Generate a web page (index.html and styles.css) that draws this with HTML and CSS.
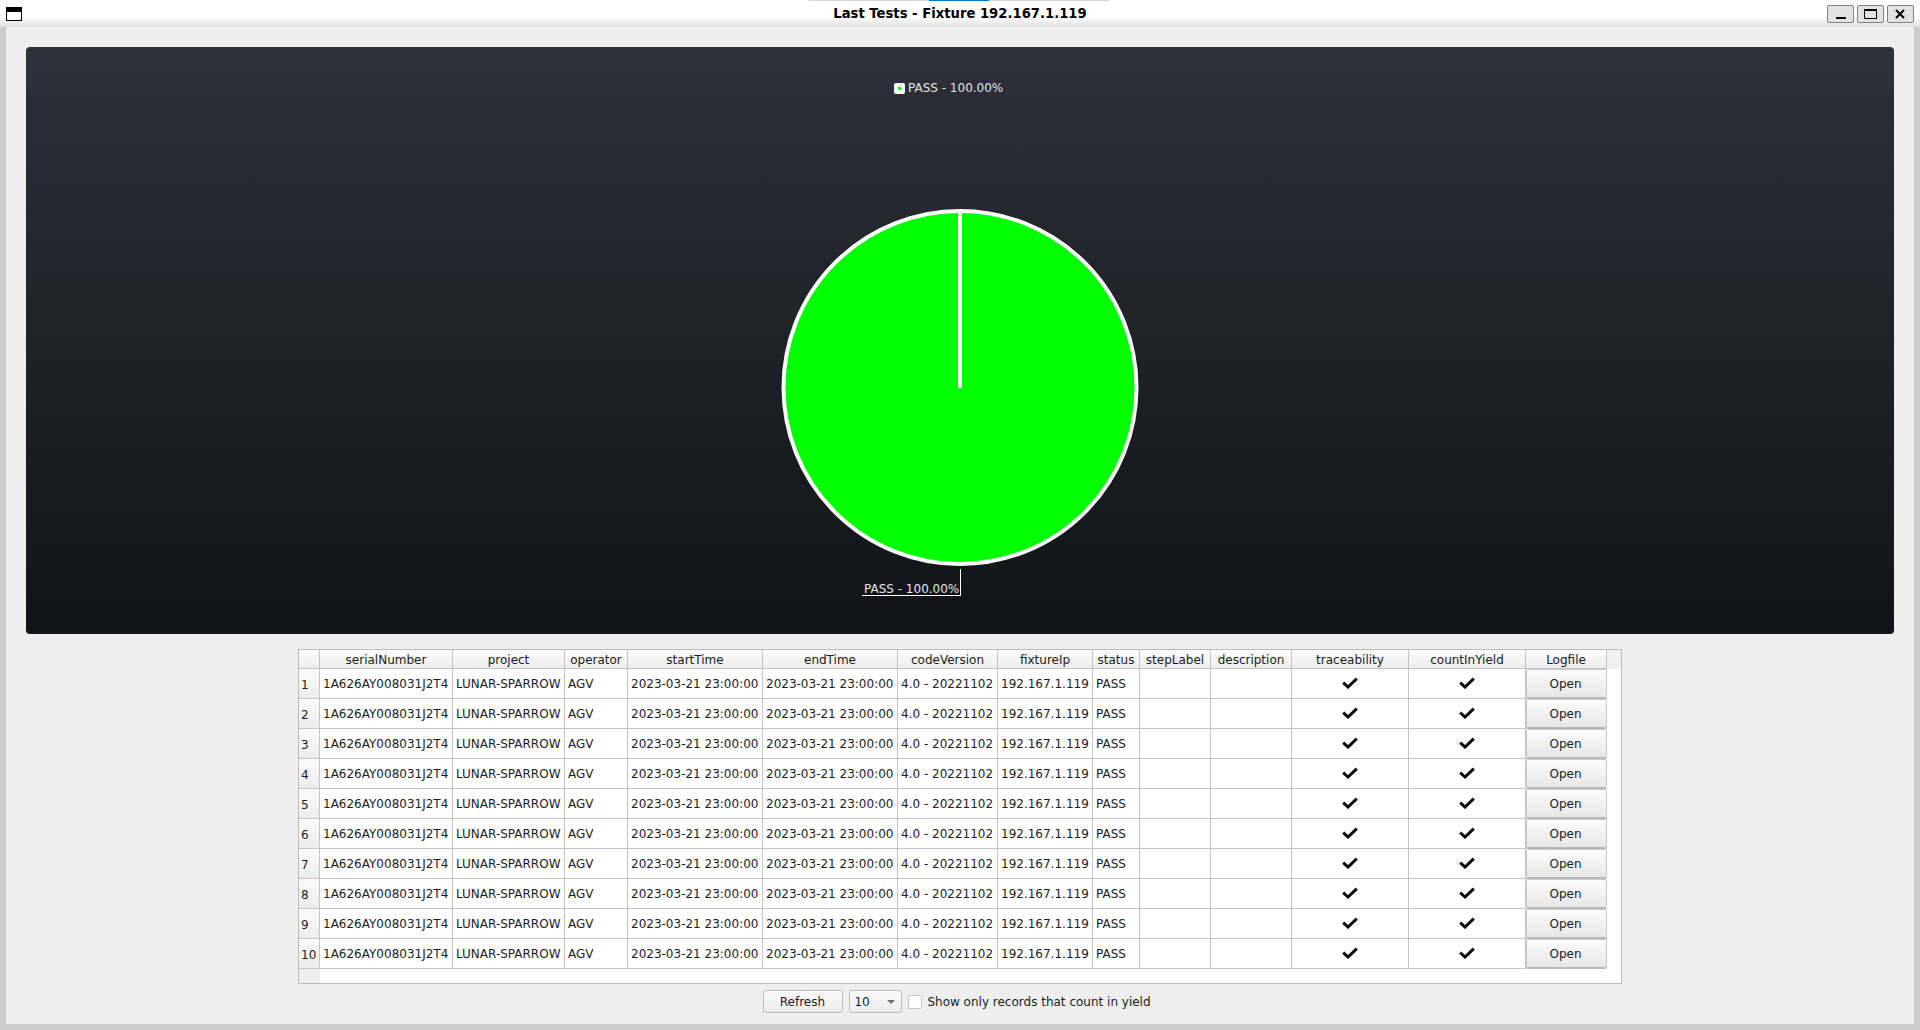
FILE: index.html
```html
<!DOCTYPE html>
<html lang="en">
<head>
  <meta charset="UTF-8">
  <title>Last Tests - Fixture 192.167.1.119</title>
  <link rel="stylesheet" href="styles.css">
</head>
<body>

  <svg class="defs" width="0" height="0">
    <symbol id="tick" viewBox="0 0 16 12">
      <polyline points="1.2,5.6 6,10 14.8,1.6" fill="none" stroke="#0c0c0c" stroke-width="3"/>
    </symbol>
  </svg>

  <header class="titlebar">
    <div class="titlebar-left"><span class="window-icon"></span></div>
    <div class="title">Last Tests - Fixture 192.167.1.119</div>
    <div class="titlebar-right">
      <button class="wm-btn" type="button">
        <svg width="25" height="16" viewBox="0 0 25 16"><rect x="8" y="11" width="10" height="2" fill="#000"/></svg>
      </button>
      <button class="wm-btn" type="button">
        <svg width="25" height="16" viewBox="0 0 25 16"><rect x="6.5" y="3.5" width="12" height="9" fill="none" stroke="#000"/><rect x="6" y="3" width="13" height="2" fill="#000"/></svg>
      </button>
      <button class="wm-btn" type="button">
        <svg width="25" height="16" viewBox="0 0 25 16"><path d="M8 4l8 8M16 4l-8 8" stroke="#000" stroke-width="2" fill="none"/></svg>
      </button>
    </div>
    <span class="focus-strip"><span class="focus-strip-blue"></span></span>
  </header>

  <main class="window">

    <section class="chart">
      <svg class="chart-canvas" width="1868" height="587" viewBox="0 0 1868 587">
        <rect x="868" y="36" width="11" height="11" rx="2" fill="#fff"/>
        <rect x="872" y="40" width="3" height="3" fill="#00ff00"/>
        <text class="chart-label" x="882" y="45">PASS - 100.00%</text>
        <circle cx="934" cy="340.5" r="176.5" fill="#00ff00" stroke="#fff" stroke-width="4"/>
        <rect x="932" y="163" width="4" height="178" fill="#fff"/>
        <path d="M934.5 522V548.5H836" fill="none" stroke="#fff"/>
        <text class="chart-label" x="838" y="546">PASS - 100.00%</text>
      </svg>
    </section>

    <section class="table-frame">
      <table class="tests">
        <colgroup>
          <col class="c-row"><col class="c-serial"><col class="c-project"><col class="c-operator">
          <col class="c-time"><col class="c-time"><col class="c-version"><col class="c-ip">
          <col class="c-status"><col class="c-step"><col class="c-desc"><col class="c-flag">
          <col class="c-flag"><col class="c-log"><col class="c-rest">
        </colgroup>
        <thead>
          <tr>
            <th></th>
            <th>serialNumber</th>
            <th>project</th>
            <th>operator</th>
            <th>startTime</th>
            <th>endTime</th>
            <th>codeVersion</th>
            <th>fixtureIp</th>
            <th>status</th>
            <th>stepLabel</th>
            <th>description</th>
            <th>traceability</th>
            <th>countInYield</th>
            <th>Logfile</th>
            <th class="rest-head"></th>
          </tr>
        </thead>
        <tbody>
          <tr><th class="row-num">1</th><td>1A626AY008031J2T4</td><td>LUNAR-SPARROW</td><td>AGV</td><td>2023-03-21 23:00:00</td><td>2023-03-21 23:00:00</td><td>4.0 - 20221102</td><td>192.167.1.119</td><td>PASS</td><td></td><td></td><td class="flag"><svg class="tick"><use href="#tick"/></svg></td><td class="flag"><svg class="tick"><use href="#tick"/></svg></td><td class="log"><button class="open-btn" type="button">Open</button></td><td class="rest"></td></tr>
          <tr><th class="row-num">2</th><td>1A626AY008031J2T4</td><td>LUNAR-SPARROW</td><td>AGV</td><td>2023-03-21 23:00:00</td><td>2023-03-21 23:00:00</td><td>4.0 - 20221102</td><td>192.167.1.119</td><td>PASS</td><td></td><td></td><td class="flag"><svg class="tick"><use href="#tick"/></svg></td><td class="flag"><svg class="tick"><use href="#tick"/></svg></td><td class="log"><button class="open-btn" type="button">Open</button></td><td class="rest"></td></tr>
          <tr><th class="row-num">3</th><td>1A626AY008031J2T4</td><td>LUNAR-SPARROW</td><td>AGV</td><td>2023-03-21 23:00:00</td><td>2023-03-21 23:00:00</td><td>4.0 - 20221102</td><td>192.167.1.119</td><td>PASS</td><td></td><td></td><td class="flag"><svg class="tick"><use href="#tick"/></svg></td><td class="flag"><svg class="tick"><use href="#tick"/></svg></td><td class="log"><button class="open-btn" type="button">Open</button></td><td class="rest"></td></tr>
          <tr><th class="row-num">4</th><td>1A626AY008031J2T4</td><td>LUNAR-SPARROW</td><td>AGV</td><td>2023-03-21 23:00:00</td><td>2023-03-21 23:00:00</td><td>4.0 - 20221102</td><td>192.167.1.119</td><td>PASS</td><td></td><td></td><td class="flag"><svg class="tick"><use href="#tick"/></svg></td><td class="flag"><svg class="tick"><use href="#tick"/></svg></td><td class="log"><button class="open-btn" type="button">Open</button></td><td class="rest"></td></tr>
          <tr><th class="row-num">5</th><td>1A626AY008031J2T4</td><td>LUNAR-SPARROW</td><td>AGV</td><td>2023-03-21 23:00:00</td><td>2023-03-21 23:00:00</td><td>4.0 - 20221102</td><td>192.167.1.119</td><td>PASS</td><td></td><td></td><td class="flag"><svg class="tick"><use href="#tick"/></svg></td><td class="flag"><svg class="tick"><use href="#tick"/></svg></td><td class="log"><button class="open-btn" type="button">Open</button></td><td class="rest"></td></tr>
          <tr><th class="row-num">6</th><td>1A626AY008031J2T4</td><td>LUNAR-SPARROW</td><td>AGV</td><td>2023-03-21 23:00:00</td><td>2023-03-21 23:00:00</td><td>4.0 - 20221102</td><td>192.167.1.119</td><td>PASS</td><td></td><td></td><td class="flag"><svg class="tick"><use href="#tick"/></svg></td><td class="flag"><svg class="tick"><use href="#tick"/></svg></td><td class="log"><button class="open-btn" type="button">Open</button></td><td class="rest"></td></tr>
          <tr><th class="row-num">7</th><td>1A626AY008031J2T4</td><td>LUNAR-SPARROW</td><td>AGV</td><td>2023-03-21 23:00:00</td><td>2023-03-21 23:00:00</td><td>4.0 - 20221102</td><td>192.167.1.119</td><td>PASS</td><td></td><td></td><td class="flag"><svg class="tick"><use href="#tick"/></svg></td><td class="flag"><svg class="tick"><use href="#tick"/></svg></td><td class="log"><button class="open-btn" type="button">Open</button></td><td class="rest"></td></tr>
          <tr><th class="row-num">8</th><td>1A626AY008031J2T4</td><td>LUNAR-SPARROW</td><td>AGV</td><td>2023-03-21 23:00:00</td><td>2023-03-21 23:00:00</td><td>4.0 - 20221102</td><td>192.167.1.119</td><td>PASS</td><td></td><td></td><td class="flag"><svg class="tick"><use href="#tick"/></svg></td><td class="flag"><svg class="tick"><use href="#tick"/></svg></td><td class="log"><button class="open-btn" type="button">Open</button></td><td class="rest"></td></tr>
          <tr><th class="row-num">9</th><td>1A626AY008031J2T4</td><td>LUNAR-SPARROW</td><td>AGV</td><td>2023-03-21 23:00:00</td><td>2023-03-21 23:00:00</td><td>4.0 - 20221102</td><td>192.167.1.119</td><td>PASS</td><td></td><td></td><td class="flag"><svg class="tick"><use href="#tick"/></svg></td><td class="flag"><svg class="tick"><use href="#tick"/></svg></td><td class="log"><button class="open-btn" type="button">Open</button></td><td class="rest"></td></tr>
          <tr><th class="row-num">10</th><td>1A626AY008031J2T4</td><td>LUNAR-SPARROW</td><td>AGV</td><td>2023-03-21 23:00:00</td><td>2023-03-21 23:00:00</td><td>4.0 - 20221102</td><td>192.167.1.119</td><td>PASS</td><td></td><td></td><td class="flag"><svg class="tick"><use href="#tick"/></svg></td><td class="flag"><svg class="tick"><use href="#tick"/></svg></td><td class="log"><button class="open-btn" type="button">Open</button></td><td class="rest"></td></tr>
        </tbody>
      </table>
      <div class="table-stub"></div>
    </section>

    <section class="controls">
      <button class="refresh-btn" type="button">Refresh</button>
      <div class="combo"><span>10</span><span class="combo-arrow"></span></div>
      <label class="yield-check"><span class="checkbox"></span>Show only records that count in yield</label>
    </section>

  </main>
</body>
</html>
```

FILE: styles.css
```css
html, body {
  margin: 0;
  padding: 0;
}

body {
  width: 1920px;
  height: 1030px;
  overflow: hidden;
  font-family: "DejaVu Sans", sans-serif;
  font-size: 12px;
  color: #1c1c1c;
  background-color: #eeeeee;
}

.defs {
  position: absolute;
}

/* title bar */
.titlebar {
  position: relative;
  display: grid;
  grid-template-columns: 1fr auto 1fr;
  align-items: center;
  height: 27px;
  box-sizing: border-box;
  padding: 0 6px;
  background: linear-gradient(#ffffff 0, #ffffff 16px, #e0e0e0 27px);
}

.window-icon {
  display: block;
  width: 16px;
  height: 14px;
  box-sizing: border-box;
  margin-top: 1px;
  border: 1px solid #000;
  border-top-width: 5px;
  background-color: #fff;
}

.title {
  font-size: 13.2px;
  font-weight: bold;
  color: #000;
  margin-top: -1px;
}

.titlebar-right {
  display: flex;
  justify-content: flex-end;
  gap: 3px;
  margin-top: 1px;
}

.wm-btn {
  display: flex;
  align-items: center;
  justify-content: center;
  width: 27px;
  height: 18px;
  padding: 0;
  border: 1px solid #808080;
  border-radius: 2px;
  background-color: #e2e2e2;
}

.focus-strip {
  position: absolute;
  left: 809px;
  top: 0;
  width: 301px;
  height: 1px;
  background-color: #d8d8d8;
}

.focus-strip-blue {
  display: block;
  width: 60px;
  height: 1px;
  margin-left: 120px;
  background-color: #0078d7;
}

/* window body */
.window {
  display: flex;
  flex-direction: column;
  align-items: center;
  height: 1003px;
  box-sizing: border-box;
  padding: 20px 20px 0;
  border-left: 6px solid #cccccc;
  border-right: 6px solid #cccccc;
  border-bottom: 6px solid #cccccc;
  background-color: #eeeeee;
}

/* chart */
.chart {
  width: 1868px;
  height: 587px;
  flex: none;
  border-radius: 4px;
  overflow: hidden;
  background: linear-gradient(#2e303a, #121318);
}

.chart-canvas {
  display: block;
}

.chart-label {
  font-family: "DejaVu Sans", sans-serif;
  font-size: 12px;
  fill: #e4e4e4;
}

/* table */
.table-frame {
  width: 1324px;
  box-sizing: border-box;
  margin-top: 15px;
  border: 1px solid #bcbcbc;
  background-color: #fff;
}

.tests {
  table-layout: fixed;
  width: 1322px;
  border-collapse: separate;
  border-spacing: 0;
}

.c-row { width: 21px; }
.c-serial { width: 133px; }
.c-project { width: 112px; }
.c-operator { width: 63px; }
.c-time { width: 135px; }
.c-version { width: 100px; }
.c-ip { width: 95px; }
.c-status { width: 47px; }
.c-step { width: 71px; }
.c-desc { width: 81px; }
.c-flag { width: 117px; }
.c-log { width: 81px; }
.c-rest { width: 14px; }

.tests th,
.tests td {
  padding: 0;
  box-sizing: border-box;
  border-right: 1px solid #c4c4c4;
  border-bottom: 1px solid #c4c4c4;
  font-weight: normal;
  white-space: nowrap;
  overflow: hidden;
}

.tests thead th {
  height: 19px;
  padding-top: 1px;
  text-align: center;
  background: linear-gradient(#fbfbfb, #ececec);
}

.tests thead th.rest-head {
  border: 0;
  background: #f0f0f0;
}

.tests td {
  height: 30px;
  padding-left: 3px;
}

.tests tbody th.row-num {
  text-align: left;
  padding-left: 2px;
  padding-top: 2px;
  background: linear-gradient(#fbfbfb, #ececec);
}

.tests td.flag {
  padding: 0;
  text-align: center;
}

.tick {
  display: inline-block;
  width: 16px;
  height: 12px;
  vertical-align: -1px;
}

.tests td.log {
  padding: 0;
  border: 0;
}

.tests td.rest {
  border: 0;
}

.open-btn {
  display: block;
  width: 100%;
  height: 30px;
  padding: 0 2px 0 0;
  border: 1px solid #c8c8c8;
  border-bottom: 2px solid #b8b8b8;
  border-radius: 2px;
  font-family: "DejaVu Sans", sans-serif;
  font-size: 12px;
  color: #1c1c1c;
  background: linear-gradient(#fcfcfc, #e6e6e6);
}

.table-stub {
  width: 21px;
  height: 14px;
  background-color: #eeeeee;
}

/* bottom controls */
.controls {
  display: flex;
  align-items: center;
  margin-top: 6px;
  padding-right: 6px;
}

.refresh-btn {
  width: 80px;
  height: 23px;
  padding: 0 2px 0 0;
  border: 1px solid #bcbcbc;
  border-radius: 3px;
  font-family: "DejaVu Sans", sans-serif;
  font-size: 12px;
  color: #1c1c1c;
  background: linear-gradient(#fafafa, #ececec);
}

.combo {
  display: flex;
  align-items: center;
  justify-content: space-between;
  width: 53px;
  height: 23px;
  box-sizing: border-box;
  margin-left: 6px;
  padding: 0 6px 0 4px;
  border: 1px solid #bcbcbc;
  border-radius: 3px;
  background: linear-gradient(#fafafa, #ececec);
}

.combo-arrow {
  width: 0;
  height: 0;
  border-left: 4px solid transparent;
  border-right: 4px solid transparent;
  border-top: 4px solid #707070;
}

.yield-check {
  display: flex;
  align-items: center;
  margin-left: 6px;
}

.checkbox {
  width: 14px;
  height: 14px;
  box-sizing: border-box;
  margin-right: 5px;
  border: 1px solid #c4c4c4;
  border-radius: 2px;
  background-color: #fff;
}
```
